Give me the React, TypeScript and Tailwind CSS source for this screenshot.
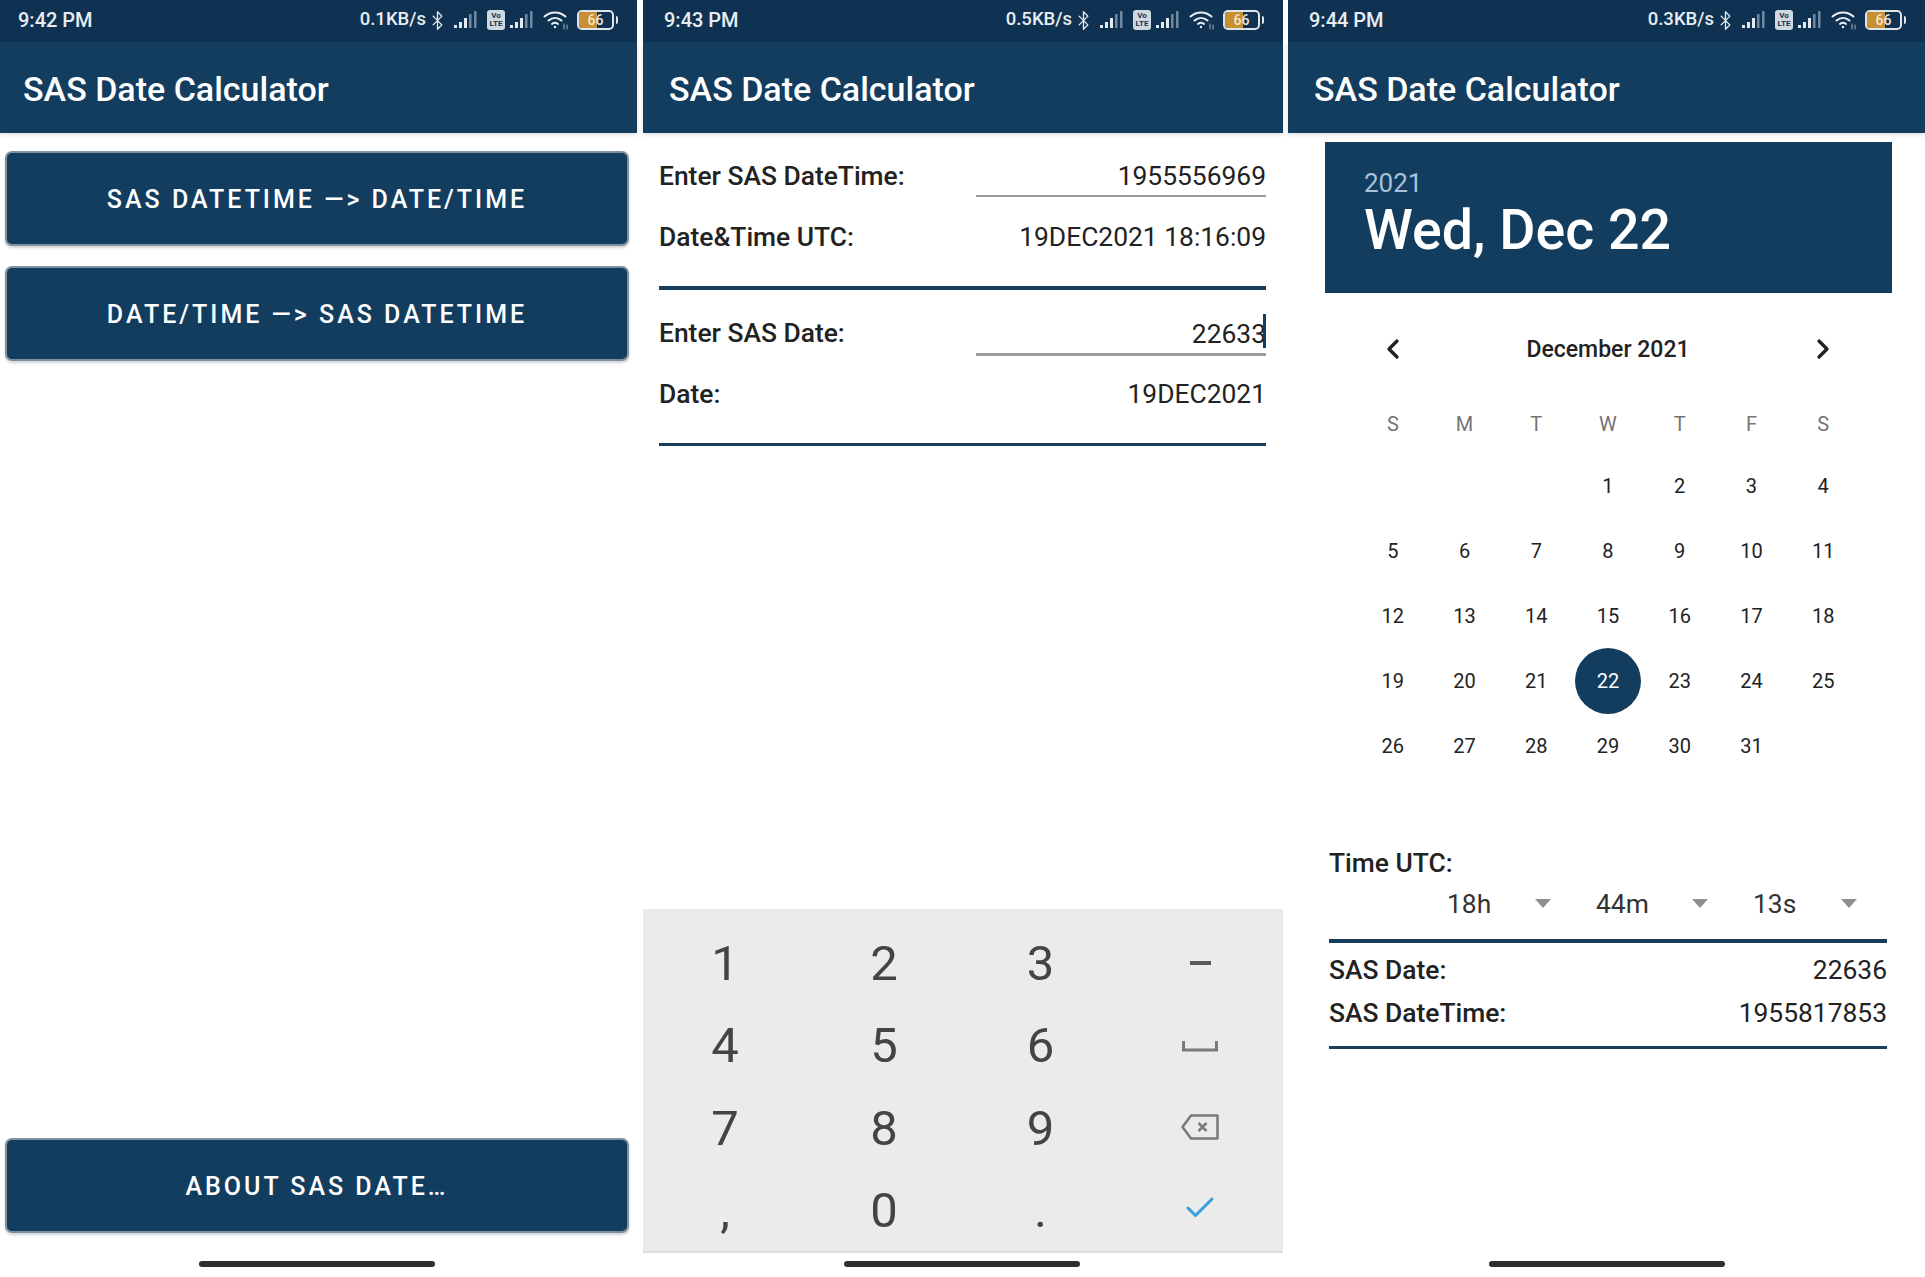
import React from "react";
import { Bluetooth, ChevronLeft, ChevronRight, Check } from "lucide-react";

const days: (number | null)[] = [
    null, null, null, 1, 2, 3, 4,
    5, 6, 7, 8, 9, 10, 11,
    12, 13, 14, 15, 16, 17, 18,
    19, 20, 21, 22, 23, 24, 25,
    26, 27, 28, 29, 30, 31, null,
];

const weekdays = ["S", "M", "T", "W", "T", "F", "S"];

const SignalBars: React.FC = () => (
    <svg width="23" height="18" viewBox="0 0 23 18" className="block">
        <rect x="0" y="14" width="3" height="3" fill="#e4eaef" />
        <rect x="5" y="11" width="3" height="6" fill="#e4eaef" />
        <rect x="10" y="7" width="3" height="10" fill="#e4eaef" />
        <rect x="15" y="3" width="2.5" height="14" fill="#6f8aa0" />
        <rect x="20" y="0" width="2.5" height="17" fill="#6f8aa0" />
    </svg>
);

const StatusBar: React.FC<{ time: string; speed: string; className: string }> = ({ time, speed, className }) => (
    <div className={`flex h-[42px] items-center justify-between bg-[#0f3252] pb-[2px] pr-[19px] text-[#e8edf1] ${className}`}>
        <span className="text-[20px] font-medium">{time}</span>
        <div className="flex items-center">
            <span className="text-[18.5px] font-medium">{speed}</span>
            <Bluetooth size={21} strokeWidth={1.5} className="ml-[1px]" />
            <div className="ml-[6px]"><SignalBars /></div>
            <div className="ml-[10px] flex h-[20px] w-[18px] flex-col items-center justify-center rounded-[3px] bg-[#cfd8df] text-[8px] font-bold leading-[8px] text-[#0f3252]">
                <span>Vo</span>
                <span>LTE</span>
            </div>
            <div className="ml-[5px]"><SignalBars /></div>
            <svg width="26" height="20" viewBox="0 0 26 20" fill="none" stroke="#e8edf1" strokeWidth="2" strokeLinecap="round" className="ml-[10px]">
                <path d="M1.5 6.5C7.5 1 16.5 1 22.5 6.5" />
                <path d="M5.5 10.5C9.5 7 14.5 7 18.5 10.5" />
                <path d="M9 14C10.8 12.6 13.2 12.6 15 14" />
                <circle cx="12" cy="17" r="1.2" fill="#e8edf1" stroke="none" />
                <path d="M21 14v5M24 15v4" strokeWidth="1" stroke="#9fb2c2" />
            </svg>
            <div className="ml-[8px] flex items-center">
                <div className="relative flex h-[20px] w-[37px] items-center overflow-hidden rounded-[5px] border-2 border-[#dfe4e8]">
                    <div className="h-full w-[18px] bg-[#c98f33]" />
                    <span className="absolute inset-0 text-center text-[14px] font-medium leading-[16px] text-[#f3e6c8]">66</span>
                </div>
                <div className="ml-[2px] h-[8px] w-[2px] rounded-r bg-[#dfe4e8]" />
            </div>
        </div>
    </div>
);

const AppBar: React.FC<{ className: string }> = ({ className }) => (
    <div className={`flex h-[91px] items-center bg-[#123d5f] pt-[3px] text-[34px] font-medium text-white shadow-[0_2px_4px_rgba(0,0,0,0.12)] ${className}`}>
        SAS Date Calculator
    </div>
);

const HomeBar: React.FC<{ className: string }> = ({ className }) => (
    <div className={`mb-[10px] mt-[8px] h-[6px] w-[236px] shrink-0 rounded-full bg-[#2f2f2f] ${className}`} />
);

const ActionButton: React.FC<{ label: string; className?: string }> = ({ label, className }) => (
    <button className={`mx-[5px] flex h-[95px] w-[624px] shrink-0 items-center justify-center rounded-[7px] border-2 border-[#7f909f] bg-[#123d5f] pt-[2px] text-[25px] font-medium uppercase tracking-[3px] text-white shadow-[0_2px_3px_rgba(0,0,0,0.18)] ${className ?? ""}`}>
        {label}
    </button>
);

const Rule: React.FC<{ className?: string }> = ({ className }) => (
    <div className={`bg-[#173f5c] ${className ?? ""}`} />
);

const Row: React.FC<{ label: string; value: string; className?: string }> = ({ label, value, className }) => (
    <div className={`flex h-[36px] items-center justify-between pt-[2px] text-[26.4px] text-[#222] ${className ?? ""}`}>
        <span className="font-medium">{label}</span>
        <span>{value}</span>
    </div>
);

const Field: React.FC<{ label: string; value: string; focused?: boolean; className?: string }> = ({ label, value, focused, className }) => (
    <div className={`flex justify-between text-[26.4px] text-[#222] ${className ?? ""}`}>
        <span className="flex h-[42px] items-center pt-[2px] font-medium">{label}</span>
        <div className={`relative flex w-[290px] items-center justify-end border-[#9a9a9a] pt-[4px] ${focused ? "h-[44px] border-b-[3px]" : "h-[42px] border-b-2"}`}>
            {value}
            {focused && <div className="absolute right-0 top-[2px] h-[34px] w-[3px] bg-[#123d5f]" />}
        </div>
    </div>
);

const Key: React.FC<{ children: React.ReactNode }> = ({ children }) => (
    <div className="flex items-center justify-center">{children}</div>
);

const Keyboard: React.FC = () => (
    <div className="mt-auto grid h-[344px] shrink-0 grid-cols-[164px_154px_159px_160px] grid-rows-[repeat(4,82.5px)] border-b-2 border-[#dedede] bg-[#ebebeb] pt-[13px] text-[49px] text-[#444]">
        <Key>1</Key>
        <Key>2</Key>
        <Key>3</Key>
        <Key>
            <div className="h-[4px] w-[21px] bg-[#5a5a5a]" />
        </Key>
        <Key>4</Key>
        <Key>5</Key>
        <Key>6</Key>
        <Key>
            <svg width="36" height="12" viewBox="0 0 36 12" fill="none" stroke="#7a7a7a" strokeWidth="3">
                <path d="M1.5 1v9h33V1" />
            </svg>
        </Key>
        <Key>7</Key>
        <Key>8</Key>
        <Key>9</Key>
        <Key>
            <svg width="38" height="26" viewBox="0 0 38 26" fill="none" stroke="#7a7a7a" strokeWidth="2.5" className="mb-[2px]">
                <path d="M10 1.5H36.5V24.5H10L1.5 13Z" strokeLinejoin="round" />
                <path d="M17.5 9L25.5 17M25.5 9L17.5 17" />
            </svg>
        </Key>
        <Key>,</Key>
        <Key>0</Key>
        <Key>.</Key>
        <Key>
            <Check size={36} strokeWidth={2} className="mb-[6px] text-[#35a0da]" />
        </Key>
    </div>
);

const Spinner: React.FC<{ value: string; className: string }> = ({ value, className }) => (
    <div className={`flex items-center justify-between ${className}`}>
        <span>{value}</span>
        <svg width="16" height="9" viewBox="0 0 16 9" className="mb-[4px]">
            <path d="M0 0H16L8 9Z" fill="#8f8f8f" />
        </svg>
    </div>
);

const App: React.FC = () => {
    return (
        <div className="flex h-[1277px] w-[1925px] overflow-hidden bg-white font-['Roboto',sans-serif]">
            {/* menu */}
            <div className="flex w-[637px] shrink-0 flex-col">
                <StatusBar time="9:42 PM" speed="0.1KB/s" className="pl-[18px]" />
                <AppBar className="pl-[23px]" />
                <ActionButton label="SAS DateTime —> Date/Time" className="mt-[18px]" />
                <ActionButton label="Date/Time —> SAS DateTime" className="mt-[20px]" />
                <ActionButton label="About SAS Date…" className="mb-[20px] mt-auto" />
                <HomeBar className="ml-[199px]" />
            </div>

            {/* converter */}
            <div className="ml-[6px] flex w-[640px] shrink-0 flex-col">
                <StatusBar time="9:43 PM" speed="0.5KB/s" className="pl-[21px]" />
                <AppBar className="pl-[26px]" />
                <div className="pl-[16px] pr-[17px] pt-[22px]">
                    <Field label="Enter SAS DateTime:" value="1955556969" />
                    <Row label="Date&Time UTC:" value="19DEC2021 18:16:09" className="mt-[22px]" />
                    <Rule className="mt-[31px] h-[4px]" />
                    <Field label="Enter SAS Date:" value="22633" focused className="mt-[22px]" />
                    <Row label="Date:" value="19DEC2021" className="mt-[20px]" />
                    <Rule className="mt-[31px] h-[3px]" />
                </div>
                <Keyboard />
                <HomeBar className="ml-[201px]" />
            </div>

            {/* date picker */}
            <div className="ml-[5px] flex w-[637px] shrink-0 flex-col">
                <StatusBar time="9:44 PM" speed="0.3KB/s" className="pl-[21px]" />
                <AppBar className="pl-[26px]" />
                <div className="ml-[37px] mt-[9px] h-[151px] w-[567px] bg-[#123d5f] pl-[39px] pt-[26px]">
                    <div className="text-[26px] leading-[30px] text-[#a9c2da]">2021</div>
                    <div className="pt-[1px] text-[55.5px] font-medium leading-[64px] text-white">Wed, Dec 22</div>
                </div>
                <div className="ml-[69px] w-[502px] text-[#222]">
                    <div className="mt-[36px] grid h-[40px] grid-cols-7 items-center">
                        <ChevronLeft size={32} strokeWidth={2.5} className="justify-self-center" />
                        <div className="col-span-5 pt-[2px] text-center text-[23px] font-medium">December 2021</div>
                        <ChevronRight size={32} strokeWidth={2.5} className="justify-self-center" />
                    </div>
                    <div className="mt-[35px] grid h-[40px] grid-cols-7 items-center text-center text-[20px] text-[#757575]">
                        {weekdays.map((d, i) => (
                            <span key={i}>{d}</span>
                        ))}
                    </div>
                    <div className="mt-[9px] grid grid-cols-7 text-[20px]">
                        {days.map((d, i) => (
                            <div key={i} className="flex h-[65px] items-center justify-center">
                                {d === 22 ? (
                                    <span className="flex h-[66px] w-[66px] items-center justify-center rounded-full bg-[#123d5f] text-white">{d}</span>
                                ) : (
                                    d
                                )}
                            </div>
                        ))}
                    </div>
                </div>
                <div className="w-[599px] pl-[41px] text-[26.4px] text-[#222]">
                    <div className="mt-[70px] h-[30px] font-medium leading-[30px]">Time UTC:</div>
                    <div className="mt-[11px] flex h-[30px] items-center pl-[118px] pt-[2px] text-[#333]">
                        <Spinner value="18h" className="w-[149px] pr-[45px]" />
                        <Spinner value="44m" className="w-[157px] pr-[45px]" />
                        <Spinner value="13s" className="w-[104px]" />
                    </div>
                    <Rule className="mt-[20px] h-[4px]" />
                    <Row label="SAS Date:" value="22636" className="mt-[9px]" />
                    <Row label="SAS DateTime:" value="1955817853" className="mt-[7px]" />
                    <Rule className="mt-[15px] h-[3px]" />
                </div>
                <div className="mt-auto">
                    <HomeBar className="ml-[201px]" />
                </div>
            </div>
        </div>
    );
};

export default App;
